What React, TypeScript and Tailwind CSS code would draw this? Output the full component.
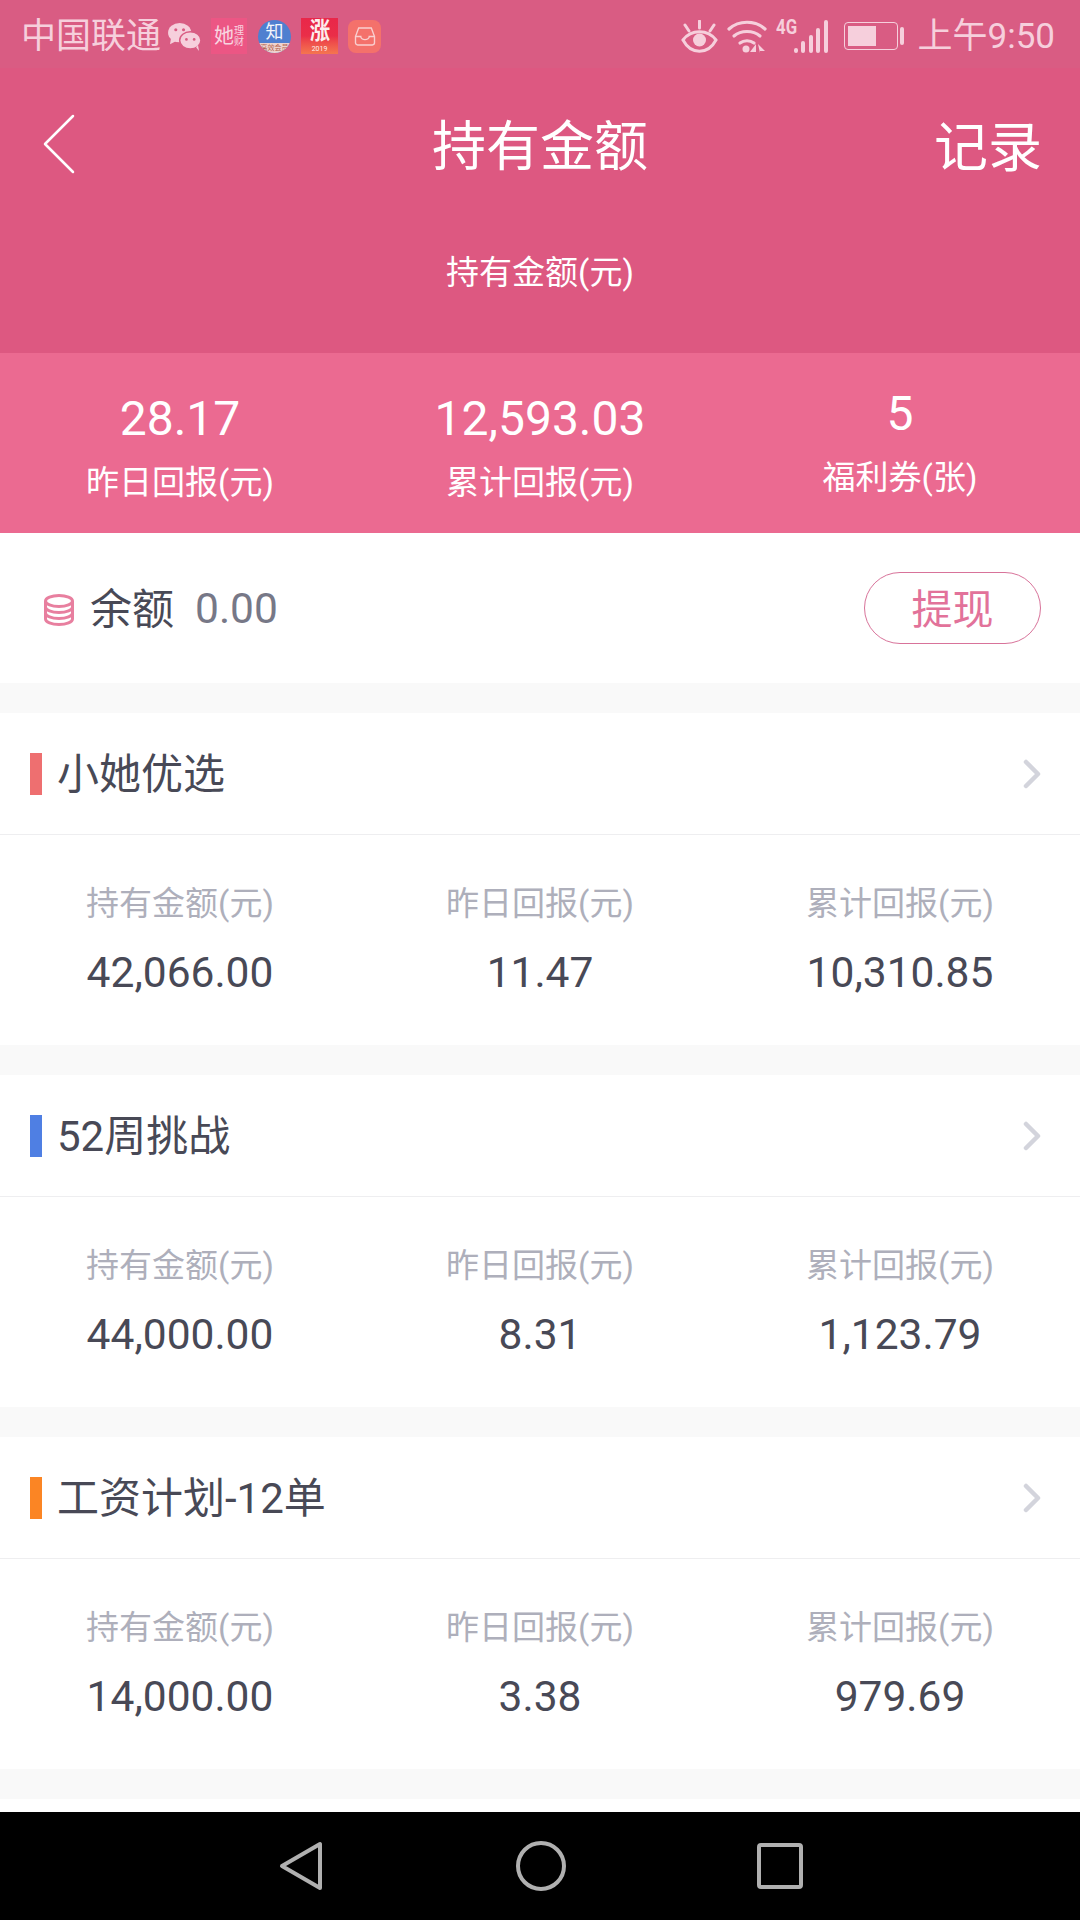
const cjk = "font-['Roboto','Noto_Sans_CJK_SC',sans-serif]";

interface Plan {
    name: string;
    color: string;
    held: string;
    yesterday: string;
    total: string;
}

const plans: Plan[] = [
    { name: '小她优选', color: 'bg-[#ee6f70]', held: '42,066.00', yesterday: '11.47', total: '10,310.85' },
    { name: '52周挑战', color: 'bg-[#4f7fe3]', held: '44,000.00', yesterday: '8.31', total: '1,123.79' },
    { name: '工资计划-12单', color: 'bg-[#fb8524]', held: '14,000.00', yesterday: '3.38', total: '979.69' },
];

function StatusBar() {
    return (
        <div className="h-[68px] shrink-0 flex items-center justify-between pt-[4px] pl-[21px] pr-[25px] text-[#f6cfdc] bg-[#d95c83]">
            <div className="flex items-center">
                <span className="text-[35px] leading-none">中国联通</span>
                <svg className="ml-[7px] w-[33px] h-[29px]" viewBox="0 0 34 30" fill="#f6cfdc">
                    <ellipse cx="12" cy="11" rx="12" ry="10" />
                    <path d="M3 17l-1 6 6-3z" />
                    <ellipse cx="23" cy="19" rx="11" ry="9" stroke="#d95c83" strokeWidth="1.5" />
                    <path d="M29 26l3 4-1-6z" />
                    <circle cx="8" cy="8" r="1.6" fill="#d95c83" />
                    <circle cx="16" cy="8" r="1.6" fill="#d95c83" />
                    <circle cx="19" cy="18" r="1.4" fill="#d95c83" />
                    <circle cx="27" cy="18" r="1.4" fill="#d95c83" />
                </svg>
                <div className="ml-[10px] w-[36px] h-[36px] bg-[#ec5684] flex items-center justify-center text-[#f8d5e0]">
                    <span className="text-[20px] leading-none">她</span>
                    <span className="text-[10px] leading-[11px] w-[10px]">理财</span>
                </div>
                <div className="ml-[11px] w-[33px] h-[33px] rounded-full overflow-hidden bg-[#4f7fd0] flex flex-col items-center text-[#f3f6fc]">
                    <span className="text-[18px] leading-[23px]">知</span>
                    <div className="w-full flex-1 bg-[#eed3cf] text-[7px] leading-[10px] text-center text-[#b5654f]">高效会员</div>
                </div>
                <div className="ml-[10px] w-[37px] h-[36px] bg-gradient-to-b from-[#e9274a] via-[#ea2e48] to-[#f4754f] flex flex-col items-center text-[#fdeeee]">
                    <span className="scale-x-85 text-[24px] leading-[27px] font-bold">涨</span>
                    <span className="text-[7px] leading-[8px]">2019</span>
                </div>
                <div className="ml-[10px] w-[33px] h-[33px] rounded-[8px] bg-[#f4716b] flex items-center justify-center">
                    <svg className="w-[22px] h-[19px]" viewBox="0 0 20 18" fill="none" stroke="#f9cfcf" strokeWidth="1.3">
                        <path d="M4 1h12l3 8v6a2 2 0 0 1-2 2H3a2 2 0 0 1-2-2V9z" />
                        <path d="M1 9h5a4 3 0 0 0 8 0h5" />
                    </svg>
                </div>
            </div>
            <div className="flex items-center">
                <svg className="w-[37px] h-[33px]" viewBox="0 0 37 33" fill="none" stroke="#f6cfdc" strokeWidth="3">
                    <path d="M2 20c8-11 25-11 33 0c-8 15-25 15-33 0z" />
                    <circle cx="18.5" cy="20" r="6.5" fill="#f6cfdc" stroke="none" />
                    <path d="M18.5 1v7M4 5l4 6M33 5l-4 6" strokeLinecap="round" />
                </svg>
                <svg className="ml-[9px] w-[40px] h-[33px]" viewBox="0 0 40 33" fill="none" stroke="#f6cfdc" strokeWidth="3.2" strokeLinecap="round">
                    <path d="M2 9c10-9 26-9 36 0" />
                    <path d="M7 16c7-6 19-6 26 0" />
                    <path d="M13 23c4-3 10-3 14 0" />
                    <circle cx="19" cy="29" r="3.5" fill="#f6cfdc" stroke="none" />
                    <path d="M29 24v8h-6zM31 24l7 7h-5v2z" fill="#f6cfdc" stroke="none" />
                </svg>
                <div className="ml-[9px] w-[52px] h-[33px] relative flex items-end justify-end gap-[3.5px]">
                    <span className="absolute left-0 top-[-3px] origin-left scale-x-80 text-[21px] leading-[21px] font-bold">4G</span>
                    <span className="w-[4px] h-[5px] rounded-full bg-[#f6cfdc]" />
                    <span className="w-[4px] h-[12px] rounded-full bg-[#f6cfdc]" />
                    <span className="w-[4px] h-[18px] rounded-full bg-[#f6cfdc]" />
                    <span className="w-[4px] h-[25px] rounded-full bg-[#f6cfdc]" />
                    <span className="w-[4px] h-[33px] rounded-full bg-[#f6cfdc]" />
                </div>
                <div className="ml-[16px] w-[54px] h-[28px] rounded-[4px] border border-[#f6cfdc] p-[3px]">
                    <div className="w-[28px] h-full bg-[#f6cfdc]" />
                </div>
                <div className="ml-[2px] w-[4px] h-[18px] rounded-full bg-[#f6cfdc]" />
                <span className="ml-[14px] text-[35px] leading-none">上午9:50</span>
            </div>
        </div>
    );
}

function PlanCard({ plan }: { plan: Plan }) {
    const cols = [
        { label: '持有金额(元)', value: plan.held },
        { label: '昨日回报(元)', value: plan.yesterday },
        { label: '累计回报(元)', value: plan.total },
    ];

    return (
        <div className="bg-white mt-[30px]">
            <div className="h-[121px] flex items-center justify-between pl-[30px] pr-[39px]">
                <div className="flex items-center">
                    <span className={`w-[12px] h-[42px] ${plan.color}`} />
                    <span className="ml-[15px] pt-[2px] text-[42px] leading-none text-[#484956]">{plan.name}</span>
                </div>
                <svg className="w-[18px] h-[30px]" viewBox="0 0 18 30" fill="none" stroke="#d3d4dc" strokeWidth="4.5" strokeLinecap="round" strokeLinejoin="round">
                    <path d="M3 3l12 12L3 27" />
                </svg>
            </div>
            <div className="h-px bg-[#eeeef0]" />
            <div className="h-[210px] grid grid-cols-3 pt-[49px] text-center">
                {cols.map((c) => (
                    <div key={c.label}>
                        <div className="text-[33px] leading-[40px] text-[#aeafbb]">{c.label}</div>
                        <div className="mt-[28px] text-[42.5px] leading-[42px] text-[#484956]">{c.value}</div>
                    </div>
                ))}
            </div>
        </div>
    );
}

export default function App() {
    return (
        <div className={`w-[1080px] h-[1920px] flex flex-col bg-white overflow-hidden ${cjk}`}>
            <StatusBar />
            <div className="h-[285px] shrink-0 bg-[#dd5881] text-white">
                <div className="h-[154px] grid grid-cols-[1fr_auto_1fr] items-center px-[38px]">
                    <svg className="ml-[5px] w-[32px] h-[62px] mb-[3px]" viewBox="0 0 32 62" fill="none" stroke="white" strokeWidth="2.5" strokeLinecap="round" strokeLinejoin="round">
                        <path d="M30 3L2 31l28 28" />
                    </svg>
                    <span className="pt-[6px] text-center whitespace-nowrap text-[54px] leading-none">持有金额</span>
                    <span className="pt-[8px] text-right text-[54px] leading-none">记录</span>
                </div>
                <div className="mt-[31px] text-center text-[33px] leading-[40px]">持有金额(元)</div>
            </div>
            <div className="h-[180px] shrink-0 bg-[#eb6a91] text-white grid grid-cols-3 text-center">
                <div className="pt-[39px]">
                    <div className="text-[48px] leading-[54px]">28.17</div>
                    <div className="mt-[17px] text-[33px] leading-[40px]">昨日回报(元)</div>
                </div>
                <div className="pt-[39px]">
                    <div className="text-[48px] leading-[54px]">12,593.03</div>
                    <div className="mt-[17px] text-[33px] leading-[40px]">累计回报(元)</div>
                </div>
                <div className="pt-[34px]">
                    <div className="text-[48px] leading-[54px]">5</div>
                    <div className="mt-[17px] text-[33px] leading-[40px]">福利券(张)</div>
                </div>
            </div>
            <div className="h-[150px] shrink-0 flex items-center justify-between pl-[44px] pr-[39px]">
                <div className="flex items-center pt-[3px]">
                    <svg className="w-[30px] h-[32px]" viewBox="0 0 30 32" fill="none" stroke="#e87f9f" strokeWidth="3">
                        <ellipse cx="15" cy="7" rx="13.5" ry="5.5" />
                        <path d="M1.5 7v18c0 3 6 5.5 13.5 5.5S28.5 28 28.5 25V7" />
                        <path d="M1.5 13c0 3 6 5.5 13.5 5.5S28.5 16 28.5 13M1.5 19c0 3 6 5.5 13.5 5.5S28.5 22 28.5 19" />
                    </svg>
                    <span className="ml-[16px] text-[42px] leading-none text-[#484956]">余额</span>
                    <span className="ml-[21px] text-[42.5px] leading-none text-[#777887]">0.00</span>
                </div>
                <div className="w-[177px] h-[72px] pt-[4px] rounded-full border border-[#d8739a] flex items-center justify-center text-[41px] leading-none text-[#e2729a]">
                    提现
                </div>
            </div>
            <div className="flex-1 bg-[#f9f9f9] overflow-hidden">
                {plans.map((p) => (
                    <PlanCard key={p.name} plan={p} />
                ))}
                <div className="mt-[30px] bg-white h-[13px]" />
            </div>
            <div className="h-[108px] shrink-0 bg-black flex items-center justify-center gap-[191px] pl-[1px]">
                <svg className="w-[44px] h-[50px]" viewBox="0 0 44 50" fill="none" stroke="#b0b0b0" strokeWidth="4" strokeLinejoin="round">
                    <path d="M41 3v44L3 25z" />
                </svg>
                <svg className="w-[50px] h-[50px] ml-[2px]" viewBox="0 0 50 50" fill="none" stroke="#b0b0b0" strokeWidth="4">
                    <circle cx="25" cy="25" r="23" />
                </svg>
                <svg className="w-[46px] h-[46px]" viewBox="0 0 46 46" fill="none" stroke="#b0b0b0" strokeWidth="4" strokeLinejoin="round">
                    <rect x="2" y="2" width="42" height="42" rx="2" />
                </svg>
            </div>
        </div>
    );
}
